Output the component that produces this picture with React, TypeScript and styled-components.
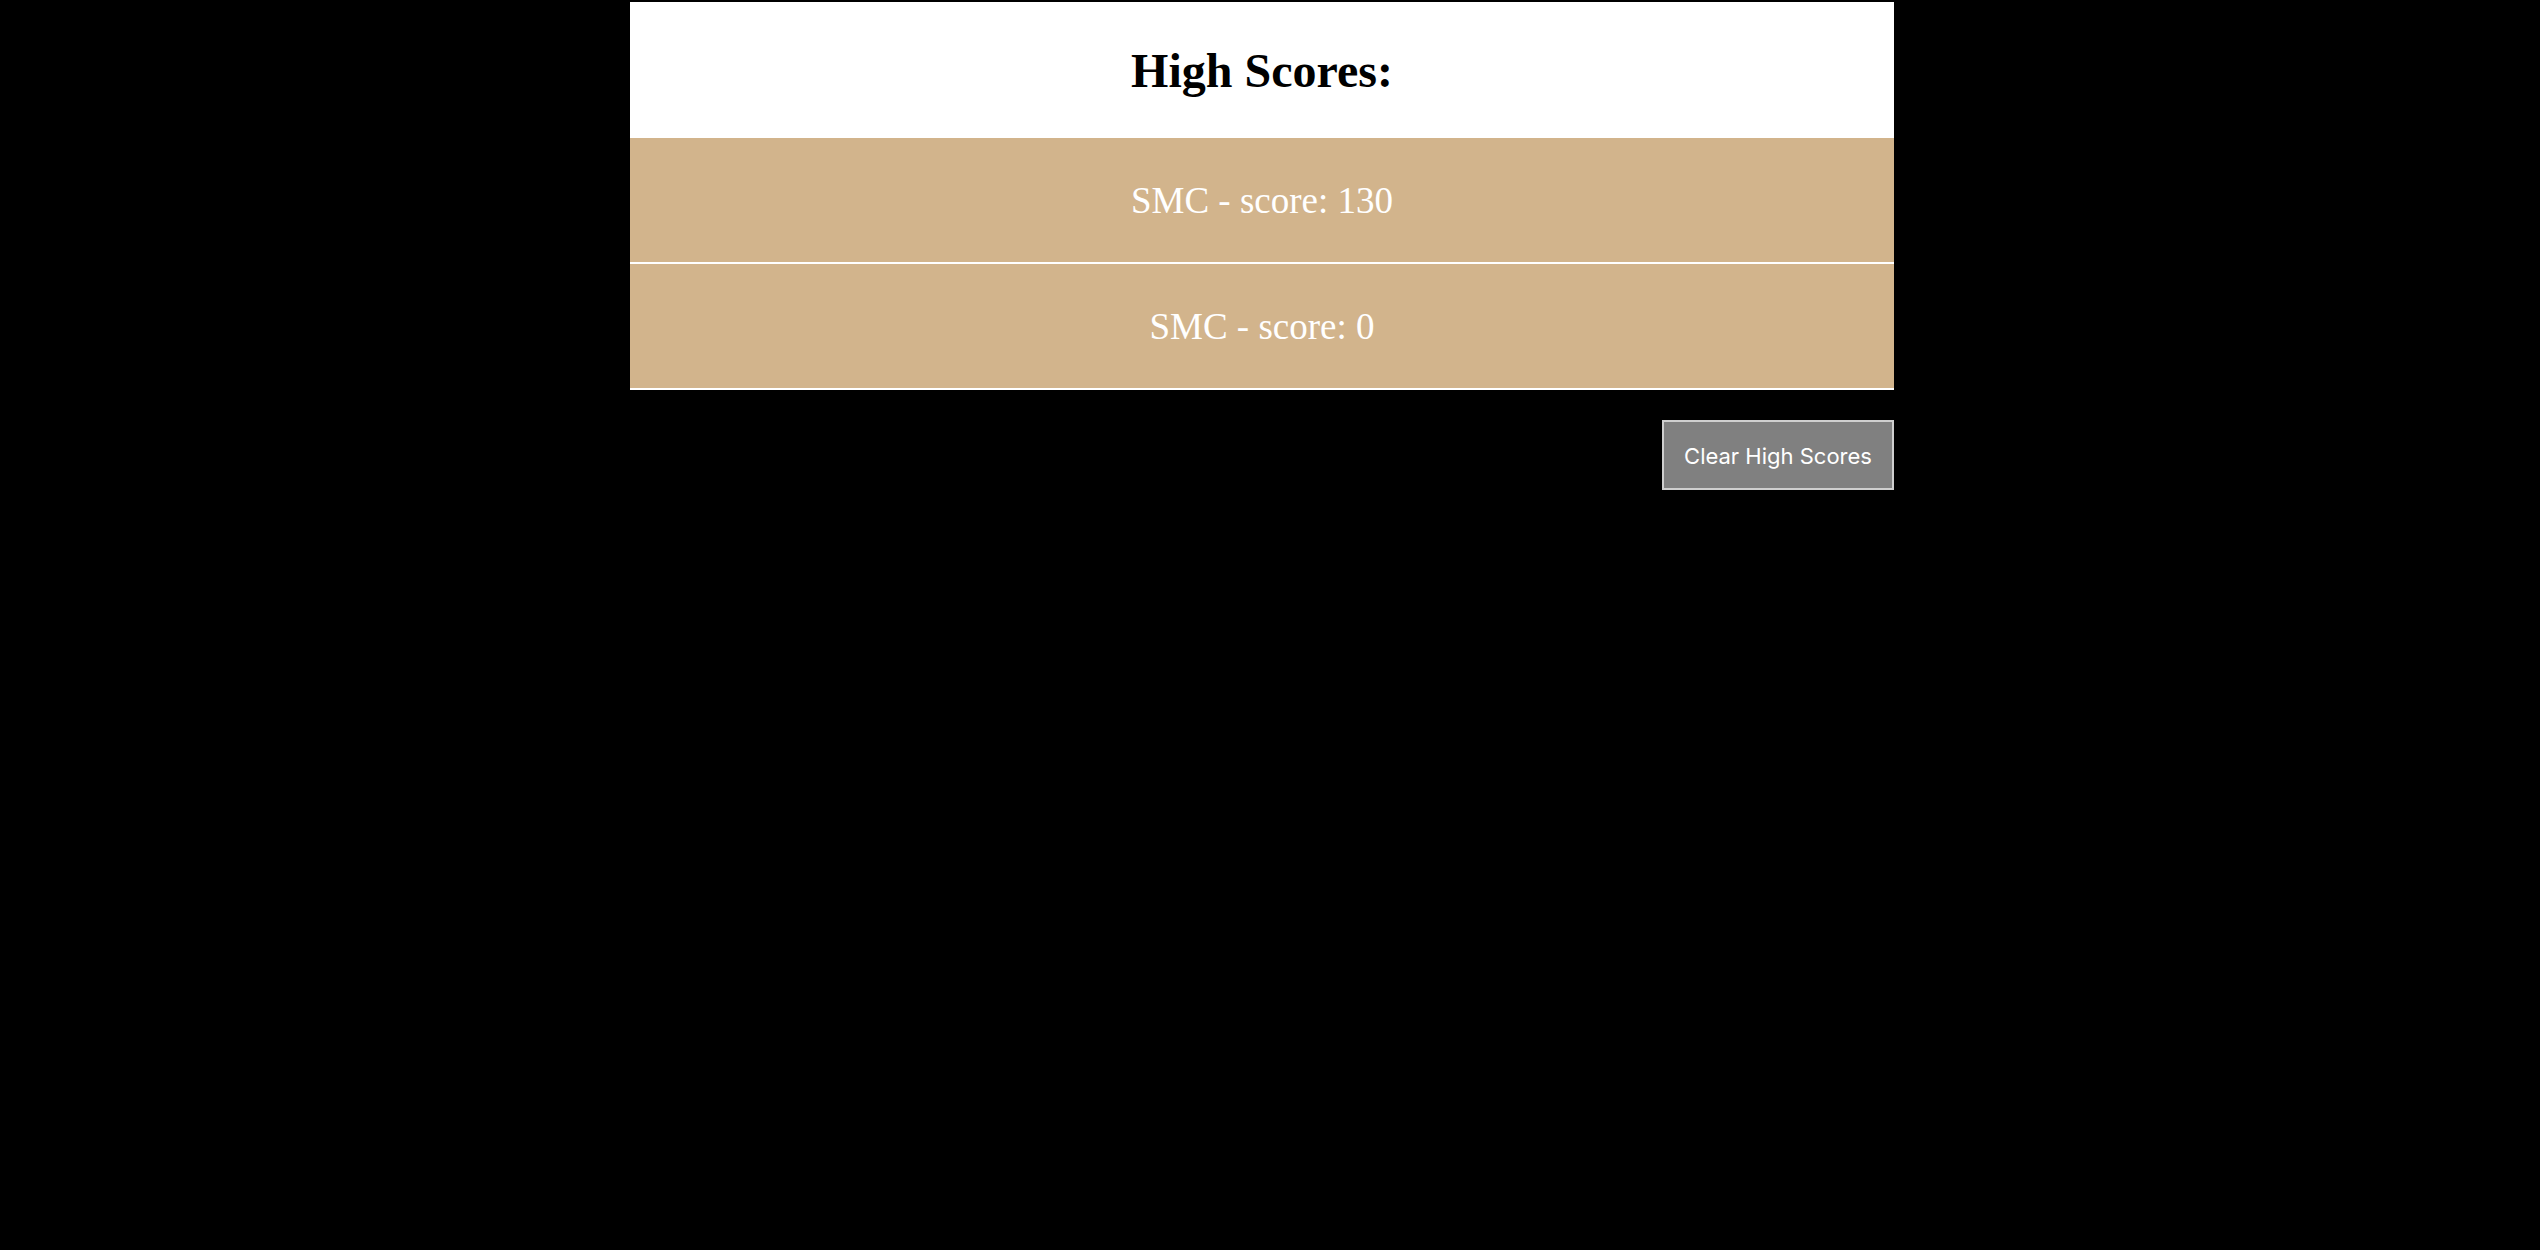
import React from 'react'
import styled, { createGlobalStyle } from 'styled-components';

const GlobalStyle = createGlobalStyle`
  html, body {
    margin: 0;
    padding: 0;
    background: #000;
  }
`;

const Page = styled.div`
  display: flex;
  justify-content: center;
  padding: 2px 16px 0 0;
  min-height: 1248px;
  background: #000;
`;

const Board = styled.div`
  width: 1264px;
  display: flex;
  flex-direction: column;
`;

const Title = styled.h1`
  margin: 0;
  height: 136px;
  display: flex;
  align-items: center;
  justify-content: center;
  background: #fff;
  color: #000;
  font-family: "Liberation Serif", "Times New Roman", serif;
  font-weight: bold;
  font-size: 48px;
`;

const ScoreList = styled.ul`
  margin: 0;
  padding: 0;
  list-style: none;
`;

const ScoreRow = styled.li`
  height: 124px;
  display: flex;
  align-items: center;
  justify-content: center;
  background: #d2b48c;
  border-bottom: 2px solid #fff;
  color: #fff;
  font-family: "Liberation Serif", "Times New Roman", serif;
  font-size: 37px;
`;

const Actions = styled.div`
  display: flex;
  justify-content: flex-end;
  margin-top: 30px;
`;

const ClearButton = styled.button`
  width: 232px;
  height: 70px;
  padding: 2px 0 0;
  background: #808080;
  border: 2px solid #cfcfcf;
  color: #fff;
  font-family: Inter, "Noto Sans", sans-serif;
  font-size: 22px;
  cursor: pointer;
`;

const scores = [
  { name: 'SMC', score: 130 },
  { name: 'SMC', score: 0 },
];

export default function App() {
  return (
    <>
      <GlobalStyle />
      <Page>
        <Board>
          <Title>High Scores:</Title>
          <ScoreList>
            {scores.map((s, i) => (
              <ScoreRow key={i}>{s.name} - score: {s.score}</ScoreRow>
            ))}
          </ScoreList>
          <Actions>
            <ClearButton>Clear High Scores</ClearButton>
          </Actions>
        </Board>
      </Page>
    </>
  );
}
